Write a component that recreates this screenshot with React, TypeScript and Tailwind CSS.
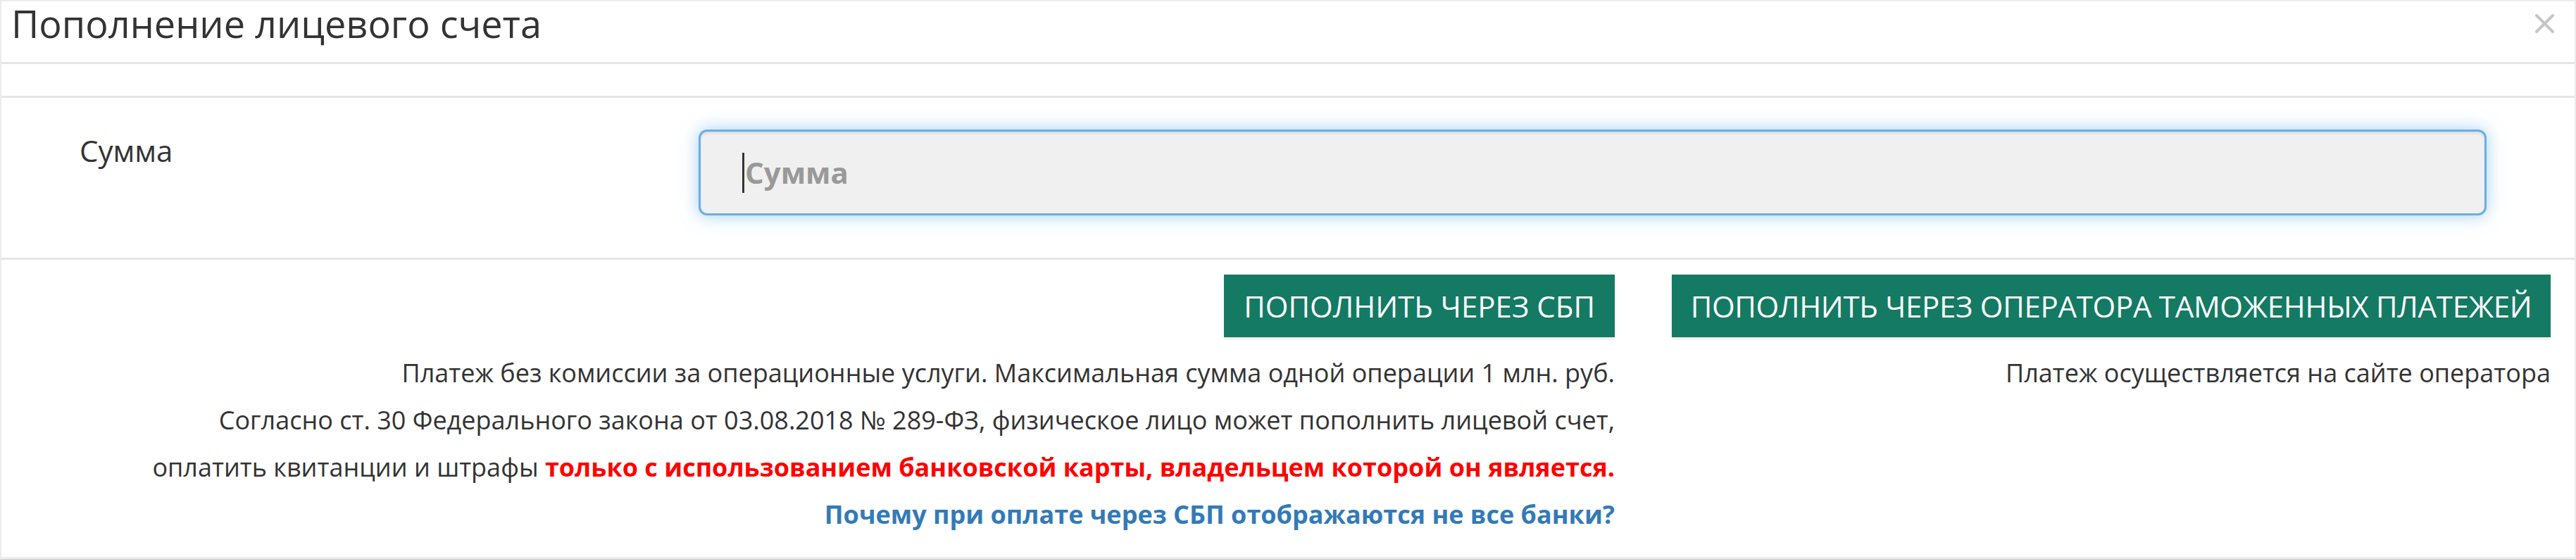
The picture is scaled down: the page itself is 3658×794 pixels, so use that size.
import React from "react";

function CloseIcon() {
  return (
    <svg width="27" height="27" viewBox="0 0 27 27" className="block">
      <path d="M2 2L25 25M25 2L2 25" stroke="#c6c6c6" strokeWidth="4" strokeLinecap="round" />
    </svg>
  );
}

export default function App() {
  return (
    <div className="w-[3658px] h-[794px] bg-white font-['Open_Sans',sans-serif] text-[#333]">
      <div className="flex h-full flex-col border-x-2 border-t-2 border-b-[3px] border-[#ececec]">
        {/* header */}
        <div className="flex h-[89px] shrink-0 items-start justify-between border-b-[3px] border-[#e5e5e5] pl-[14px] pt-[4px]">
          <h4 className="text-[54px] leading-[54px] font-normal text-[#333]">Пополнение лицевого счета</h4>
          <button className="mr-[29px] mt-[14px]">
            <CloseIcon />
          </button>
        </div>

        <div className="h-[48px] shrink-0 border-b-[3px] border-[#e5e5e5]" />

        {/* form */}
        <div className="flex h-[230px] shrink-0 items-start border-b-[3px] border-[#e5e5e5]">
          <label className="w-[990px] shrink-0 pl-[111px] pt-[54px] text-[42px] leading-[42px]">Сумма</label>
          <div className="mr-[125px] mt-[45px] flex h-[122px] flex-1 items-center rounded-[12px] border-[3px] border-[#66afe9] bg-[#f0f0f0] pl-[59px] shadow-[inset_0_3px_3px_rgba(0,0,0,0.075),0_0_24px_rgba(102,175,233,0.6)]">
            <span className="h-[57px] w-[3px] bg-[#333]" />
            <span className="ml-[1px] text-[42px] font-bold leading-[42px] text-[#999]">Сумма</span>
          </div>
        </div>

        {/* footer */}
        <div className="flex flex-1 justify-end pr-[34px] pt-[21px]">
          <div className="flex flex-col items-end text-right">
            <button className="h-[89px] whitespace-nowrap bg-[#147a63] px-[28px] text-[42px] uppercase text-white shadow-[0_3px_3px_rgba(0,0,0,0.08)]">
              Пополнить через СБП
            </button>
            <div className="mt-[17px] text-[36px] leading-[67px]">
              <p>Платеж без комиссии за операционные услуги. Максимальная сумма одной операции 1 млн. руб.</p>
              <p>Согласно ст. 30 Федерального закона от 03.08.2018 № 289-ФЗ, физическое лицо может пополнить лицевой счет,</p>
              <p>
                оплатить квитанции и штрафы{" "}
                <b className="text-[#ff0000]">только с использованием банковской карты, владельцем которой он является.</b>
              </p>
              <p>
                <a className="font-bold text-[#337ab7]" href="#">
                  Почему при оплате через СБП отображаются не все банки?
                </a>
              </p>
            </div>
          </div>
          <div className="ml-[81px] flex w-[1248px] flex-col items-end text-right">
            <button className="flex h-[89px] w-full items-center justify-center whitespace-nowrap bg-[#147a63] text-[42px] tracking-[-0.3px] uppercase text-white shadow-[0_3px_3px_rgba(0,0,0,0.08)]">
              Пополнить через оператора таможенных платежей
            </button>
            <p className="mt-[17px] text-[36px] leading-[67px]">Платеж осуществляется на сайте оператора</p>
          </div>
        </div>
      </div>
    </div>
  );
}
